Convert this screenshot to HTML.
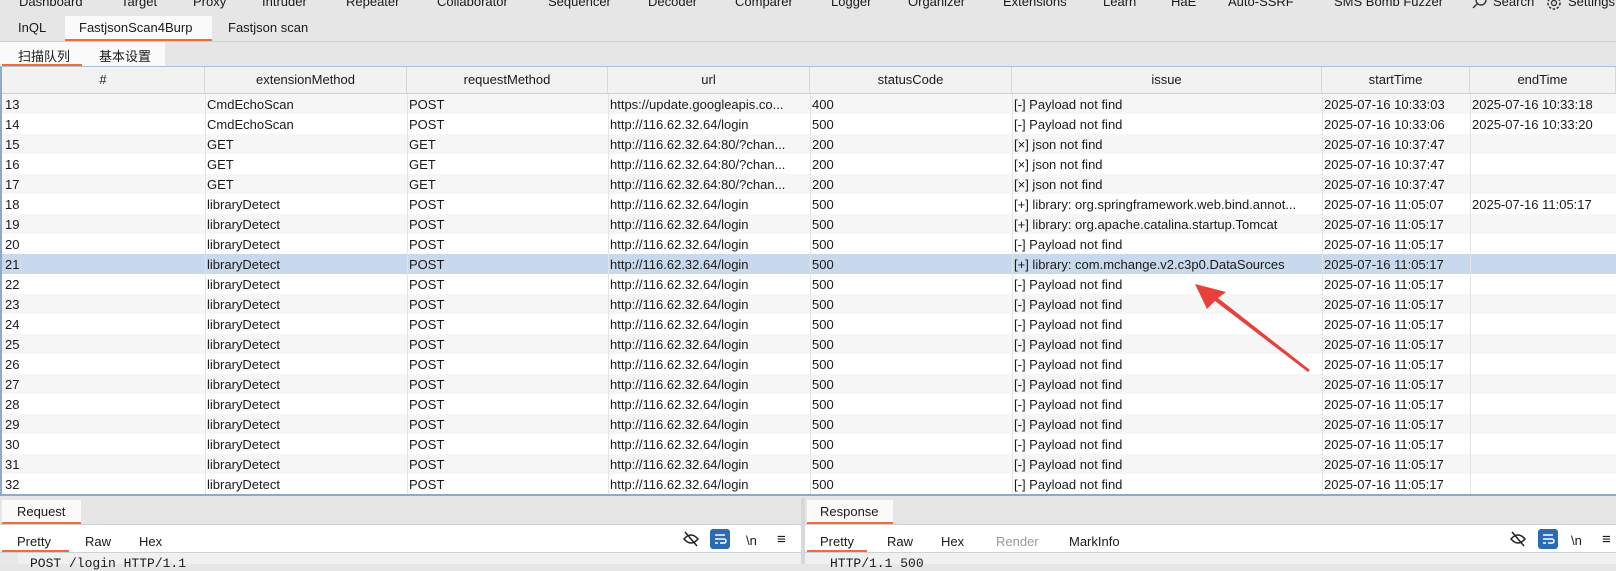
<!DOCTYPE html>
<html><head><meta charset="utf-8"><style>
*{margin:0;padding:0;box-sizing:border-box}
body{width:1616px;height:564px;overflow:hidden;background:#e6e6e6;font-family:"Liberation Sans","Noto Sans CJK SC",sans-serif;font-size:13px;color:#1a1a1a;position:relative}
.a{position:absolute;white-space:nowrap}
.row{position:absolute;left:2px;width:1614px;height:20px}
.row span{position:absolute;top:3px;white-space:nowrap}
.vl{position:absolute;width:1px;background:#e4e4e4}
.hd{position:absolute;top:67px;height:27px;background:#f2f2f2;border-right:1px solid #d8d8d8;border-bottom:1px solid #d0d0d0;text-align:center;line-height:25px}
</style></head><body>
<div class="a" style="top:-6px;left:19px">Dashboard</div>
<div class="a" style="top:-6px;left:121px">Target</div>
<div class="a" style="top:-6px;left:193px">Proxy</div>
<div class="a" style="top:-6px;left:262px">Intruder</div>
<div class="a" style="top:-6px;left:346px">Repeater</div>
<div class="a" style="top:-6px;left:437px">Collaborator</div>
<div class="a" style="top:-6px;left:548px">Sequencer</div>
<div class="a" style="top:-6px;left:648px">Decoder</div>
<div class="a" style="top:-6px;left:735px">Comparer</div>
<div class="a" style="top:-6px;left:831px">Logger</div>
<div class="a" style="top:-6px;left:908px">Organizer</div>
<div class="a" style="top:-6px;left:1003px">Extensions</div>
<div class="a" style="top:-6px;left:1103px">Learn</div>
<div class="a" style="top:-6px;left:1171px">HaE</div>
<div class="a" style="top:-6px;left:1228px">Auto-SSRF</div>
<div class="a" style="top:-6px;left:1334px">SMS Bomb Fuzzer</div>
<svg class="a" style="top:-4px;left:1471px" width="16" height="14"><circle cx="10" cy="4" r="5" fill="none" stroke="#333" stroke-width="1.4"/><line x1="6" y1="8" x2="2" y2="12" stroke="#333" stroke-width="1.5"/></svg>
<div class="a" style="top:-6px;left:1493px">Search</div>
<svg class="a" style="top:-6px;left:1545px" width="18" height="18"><circle cx="9" cy="9" r="6" fill="none" stroke="#333" stroke-width="1.5" stroke-dasharray="2.5 1.6"/><circle cx="9" cy="9" r="2.5" fill="none" stroke="#333" stroke-width="1.3"/></svg>
<div class="a" style="top:-6px;left:1568px">Settings</div>
<div class="a" style="top:16px;left:65px;width:147px;height:25px;background:#fafafa;border-bottom:2px solid #f26b3a"></div>
<div class="a" style="top:20px;left:18px">InQL</div>
<div class="a" style="top:20px;left:79px">FastjsonScan4Burp</div>
<div class="a" style="top:20px;left:228px">Fastjson scan</div>
<div class="a" style="top:41px;left:0;width:1616px;height:1px;background:#cfcfcf"></div>
<div class="a" style="top:42px;left:0;width:165px;height:25px;background:#fafafa"></div>
<div class="a" style="top:64px;left:2px;width:80px;height:2px;background:#f26b3a"></div>
<div class="a" style="top:46px;left:18px">扫描队列</div>
<div class="a" style="top:46px;left:99px">基本设置</div>
<div class="a" style="top:66px;left:0;width:1616px;height:430px;background:#fff;border-top:1px solid #a9c0d8;border-left:2px solid #8fa9c6;border-bottom:2px solid #8fa9c6"></div>
<div class="hd" style="left:2px;width:203px">#</div>
<div class="hd" style="left:205px;width:202px">extensionMethod</div>
<div class="hd" style="left:407px;width:201px">requestMethod</div>
<div class="hd" style="left:608px;width:202px">url</div>
<div class="hd" style="left:810px;width:202px">statusCode</div>
<div class="hd" style="left:1012px;width:310px">issue</div>
<div class="hd" style="left:1322px;width:148px">startTime</div>
<div class="hd" style="left:1470px;width:146px">endTime</div>
<div id="rows"></div>
<script>
var L='http://116.62.32.64/login',P='[-] Payload not find',J='[×] json not find',G='http://116.62.32.64:80/?chan...';
var d=[
[13,'CmdEchoScan','POST','https://update.googleapis.co...',400,P,'2025-07-16 10:33:03','2025-07-16 10:33:18'],
[14,'CmdEchoScan','POST',L,500,P,'2025-07-16 10:33:06','2025-07-16 10:33:20'],
[15,'GET','GET',G,200,J,'2025-07-16 10:37:47',''],
[16,'GET','GET',G,200,J,'2025-07-16 10:37:47',''],
[17,'GET','GET',G,200,J,'2025-07-16 10:37:47',''],
[18,'libraryDetect','POST',L,500,'[+] library: org.springframework.web.bind.annot...','2025-07-16 11:05:07','2025-07-16 11:05:17'],
[19,'libraryDetect','POST',L,500,'[+] library: org.apache.catalina.startup.Tomcat','2025-07-16 11:05:17',''],
[20,'libraryDetect','POST',L,500,P,'2025-07-16 11:05:17',''],
[21,'libraryDetect','POST',L,500,'[+] library: com.mchange.v2.c3p0.DataSources','2025-07-16 11:05:17','']];
for(var i=22;i<=32;i++)d.push([i,'libraryDetect','POST',L,500,P,'2025-07-16 11:05:17','']);
var xs=[5,207,409,610,812,1014,1324,1472],h='';
d.forEach(function(r,k){var bg=r[0]==21?'#c8d9ee':(k%2==0?'#f6f6f6':'#fff');
h+='<div class="row" style="top:'+(94+k*20)+'px;background:'+bg+'">';
r.forEach(function(c,j){h+='<span style="left:'+(xs[j]-2)+'px">'+c+'</span>'});h+='</div>';});
[205,407,608,810,1012,1322,1470].forEach(function(x){h+='<div class="vl" style="left:'+x+'px;top:94px;height:400px"></div>'});
document.getElementById('rows').innerHTML=h;
</script>
<svg class="a" style="left:0;top:0" width="1616" height="564"><polygon points="1195,284 1226,292 1218,298 1310,370 1308,372 1215,301 1207,309" fill="#e8403a"/></svg>
<div class="a" style="top:496px;left:0;width:1616px;height:68px;background:#e6e6e6"></div>
<div class="a" style="top:500px;left:2px;width:79px;height:24px;background:#fafafa;border-bottom:2px solid #f26b3a"></div>
<div class="a" style="top:504px;left:17px">Request</div>
<div class="a" style="top:524px;left:0;width:801px;height:29px;background:#fff;border-top:1px solid #cfd2d4;border-bottom:1px solid #cfd2d4"></div>
<div class="a" style="top:550px;left:2px;width:67px;height:2px;background:#f26b3a"></div>
<div class="a" style="top:534px;left:17px">Pretty</div>
<div class="a" style="top:534px;left:85px">Raw</div>
<div class="a" style="top:534px;left:139px">Hex</div>
<div class="a" style="top:553px;left:0;width:801px;height:11px;background:#f0f0f0"></div>
<div class="a" style="top:553px;left:0;width:18px;height:11px;background:#e8e8e8"></div>
<div class="a" style="top:556px;left:30px;font-family:'Liberation Mono',monospace">POST /login HTTP/1.1</div>
<div class="a" style="top:498px;left:801px;width:4px;height:66px;background:#d8d8d8"></div>
<div class="a" style="top:500px;left:807px;width:86px;height:24px;background:#fafafa;border-bottom:2px solid #f26b3a"></div>
<div class="a" style="top:504px;left:820px">Response</div>
<div class="a" style="top:524px;left:805px;width:811px;height:29px;background:#fff;border-top:1px solid #cfd2d4;border-bottom:1px solid #cfd2d4"></div>
<div class="a" style="top:550px;left:807px;width:60px;height:2px;background:#f26b3a"></div>
<div class="a" style="top:534px;left:820px">Pretty</div>
<div class="a" style="top:534px;left:887px">Raw</div>
<div class="a" style="top:534px;left:941px">Hex</div>
<div class="a" style="top:534px;left:996px;color:#999">Render</div>
<div class="a" style="top:534px;left:1069px">MarkInfo</div>
<div class="a" style="top:553px;left:805px;width:811px;height:11px;background:#f0f0f0"></div>
<div class="a" style="top:556px;left:830px;font-family:'Liberation Mono',monospace">HTTP/1.1 500</div>
<svg class="a" style="top:530px;left:682px" width="18" height="18"><path d="M2 9 Q9 1 16 9 Q9 17 2 9Z" fill="none" stroke="#222" stroke-width="1.5"/><line x1="3" y1="2" x2="15" y2="16" stroke="#222" stroke-width="1.5"/></svg>
<div class="a" style="top:529px;left:710px;width:20px;height:20px;background:#2a6bb3;border-radius:3px"></div>
<svg class="a" style="top:531px;left:712px" width="16" height="16"><path d="M3 4h10M3 8h9a2 2 0 010 4h-4M3 12h3" fill="none" stroke="#fff" stroke-width="1.5"/></svg>
<div class="a" style="top:533px;left:746px">\n</div>
<div class="a" style="top:531px;left:777px;font-size:15px">≡</div>
<svg class="a" style="top:530px;left:1509px" width="18" height="18"><path d="M2 9 Q9 1 16 9 Q9 17 2 9Z" fill="none" stroke="#222" stroke-width="1.5"/><line x1="3" y1="2" x2="15" y2="16" stroke="#222" stroke-width="1.5"/></svg>
<div class="a" style="top:529px;left:1538px;width:20px;height:20px;background:#2a6bb3;border-radius:3px"></div>
<svg class="a" style="top:531px;left:1540px" width="16" height="16"><path d="M3 4h10M3 8h9a2 2 0 010 4h-4M3 12h3" fill="none" stroke="#fff" stroke-width="1.5"/></svg>
<div class="a" style="top:533px;left:1571px">\n</div>
<div class="a" style="top:531px;left:1602px;font-size:15px">≡</div>
</body></html>
